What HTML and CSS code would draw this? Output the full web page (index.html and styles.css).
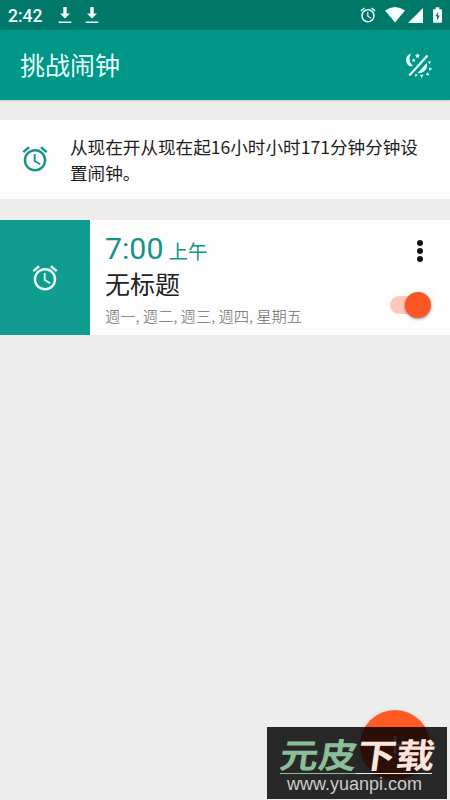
FILE: index.html
```html
<!DOCTYPE html>
<html lang="zh-CN">
<head>
<meta charset="utf-8">
<meta name="viewport" content="width=device-width">
<title>挑战闹钟</title>
<link rel="stylesheet" href="styles.css">
</head>
<body>
<svg class="defs" width="0" height="0">
  <symbol id="alarm" viewBox="0 0 24 24"><path d="M22 5.72l-4.6-3.86-1.29 1.53 4.6 3.86L22 5.72zM7.88 3.39L6.6 1.86 2 5.71l1.29 1.53 4.59-3.85zM12.5 8H11v6l4.75 2.85.75-1.23-4-2.37V8zM12 4c-4.97 0-9 4.03-9 9s4.02 9 9 9a9 9 0 0 0 0-18zm0 16c-3.87 0-7-3.13-7-7s3.13-7 7-7 7 3.13 7 7-3.13 7-7 7z"/></symbol>
  <symbol id="download" viewBox="0 0 14 18"><path d="M5.3 1h3.4v6.5H12L7 12.6 2 7.500h3.300zM.7 15.400h12.600v1.500H.7z"/></symbol>
</svg>
<header class="statusbar">
  <span class="clock">2:42</span>
  <svg class="dl"><use href="#download"/></svg>
  <svg class="dl"><use href="#download"/></svg>
  <svg class="status-alarm"><use href="#alarm"/></svg>
  <svg class="wifi" viewBox="0 0 20 16"><path d="M0 3.500Q10-3.500 20 3.500L10 15.500z"/></svg>
  <svg class="signal" viewBox="0 0 15 15"><path d="M15 0v15H0z"/></svg>
  <svg class="battery" viewBox="0 0 10 17"><path fill-rule="evenodd" d="M3 0h4v2h2q1 0 1 1v13q0 1-1 1H1q-1 0-1-1V3q0-1 1-1h2zM6 5L2.500 10h2v4.500L7.500 9h-2z"/></svg>
</header>
<div class="appbar">
  <h1>挑战闹钟</h1>
  <svg class="daynight" viewBox="0 0 28 28">
    <path d="M6.500 2.500C-.5 4 -.5 12.500 5 15.500L8 14.800C3.800 11.500 3.500 6.500 6.500 2.500z"/>
    <path d="M12.500 2.300l.8 1.500 1.700.3-1.200 1.200.2 1.700-1.500-.8-1.500.8.200-1.700L10 4.100l1.700-.3zM8.700 7.300l.6 1.200 1.300.2-.9.900.2 1.300-1.200-.6-1.200.6.200-1.300-.9-.9 1.300-.2z"/>
    <path d="M21.800 12A8 8 0 0 1 12.500 22z"/>
    <path d="M22.700 10.200l3.500.3-1.800 2.800zM24 16.200l3.300 1.800-3.300 1.800zM22.800 21.200l1.700 3.300-3.800-.8zM14.800 23.800h3.800l-1.900 3.200zM10.300 22.800l2.700 1.200-2.800 2z"/>
    <path class="slash" d="M22.500 4.500L4.300 24.500"/>
  </svg>
</div>
<main>
  <section class="card notice">
    <svg class="alarm teal"><use href="#alarm"/></svg>
    <p>从现在开从现在起16小时小时171分钟分钟设<br>置闹钟。</p>
  </section>
  <section class="card entry">
    <div class="tile"><svg class="alarm"><use href="#alarm"/></svg></div>
    <div class="details">
      <div class="time"><span class="digits">7:00</span><span class="period">上午</span></div>
      <div class="label">无标题</div>
      <div class="days">週一, 週二, 週三, 週四, 星期五</div>
    </div>
    <div class="controls">
      <div class="more"><i></i><i></i><i></i></div>
      <div class="switch"><div class="thumb"></div></div>
    </div>
  </section>
</main>
<div class="fab"><svg viewBox="0 0 14 14"><path d="M6 0h2v6h6v2H8v6H6V8H0V6h6z"/></svg></div>
<div class="watermark">
  <div class="brand"><svg viewBox="0 0 160 35"><text x="0" y="30" textLength="155" lengthAdjust="spacingAndGlyphs"><tspan class="green">元皮</tspan><tspan class="pink">下载</tspan></text></svg></div>
  <div class="rule"></div>
  <div class="site">www.yuanpi.com</div>
</div>
</body>
</html>
```

FILE: styles.css
```css
* { box-sizing: border-box; }
body {
  margin: 0;
  width: 450px;
  height: 800px;
  overflow: hidden;
  position: relative;
  background: #ededed;
  font-family: Roboto, "Noto Sans CJK SC", sans-serif;
}
svg { display: block; fill: currentColor; flex: none; }
.defs { position: absolute; }
.statusbar {
  height: 30px;
  padding: 0 8px;
  display: flex;
  align-items: center;
  background: #00796b;
  color: #f2fffc;
}
.clock { width: 50px; font-size: 17.5px; font-weight: 500; line-height: 30px; padding-top: 2px; }
.dl { width: 14px; height: 18px; margin-right: 13px; }
.status-alarm { width: 18px; height: 18px; margin-left: 247px; }
.wifi { width: 20px; height: 16px; margin-left: 8px; }
.signal { width: 15px; height: 15px; margin-left: 3px; }
.battery { width: 9px; height: 16px; margin-left: 10px; }
.appbar {
  height: 70px;
  padding: 0 17px 0 20px;
  display: flex;
  align-items: center;
  justify-content: space-between;
  background: #009688;
  color: #e8fffb;
  box-shadow: 0 1px 2px rgba(0, 0, 0, .15);
}
h1 { margin: 0; padding-top: 4px; font-size: 25px; font-weight: 400; line-height: 36px; }
.daynight { width: 28px; height: 28px; margin-top: -1px; }
.slash { stroke: currentColor; stroke-width: 2.2; }
main { padding-top: 20px; }
.card { background: #fdfdfd; display: flex; }
.notice { height: 79px; margin-bottom: 21px; padding-left: 20px; align-items: center; }
.alarm { width: 30px; height: 30px; }
.notice .alarm { margin-top: -2px; }
.teal { color: #159588; }
.notice p { margin: 0 0 0 20px; font-size: 17.600px; line-height: 26px; color: #1d1d1d; white-space: nowrap; font-family: "Noto Sans CJK SC", sans-serif; }
.entry { height: 115px; }
.tile { width: 90px; display: flex; align-items: center; justify-content: center; background: #109c8f; color: #e8fffb; }
.details { flex: 1; padding: 10px 0 0 15px; }
.time { height: 38px; display: flex; align-items: baseline; color: #129488; line-height: 37px; }
.digits { font-size: 30.300px; }
.period { font-size: 19.500px; margin-left: 5px; }
.label { height: 34px; font-size: 25px; line-height: 36px; color: #222; }
.days { font-size: 15.300px; line-height: 26px; color: #6c6c6c; font-family: "Noto Sans CJK TC", sans-serif; font-weight: 300; white-space: nowrap; }
.controls { width: 60px; display: flex; flex-direction: column; padding-top: 20px; }
.more { width: 6px; margin-left: 27px; display: grid; gap: 2px; }
.more i { width: 6px; height: 6px; border-radius: 50%; background: #151515; }
.switch { width: 40px; height: 18px; margin-top: 34px; border-radius: 9px; background: #ffc8b8; display: flex; align-items: center; justify-content: flex-end; }
.thumb { width: 26px; height: 26px; border-radius: 50%; background: #fc5622; box-shadow: 0 1px 3px rgba(0, 0, 0, .45); margin-right: -1px; flex: none; }
.fab {
  position: absolute;
  left: 360px;
  top: 710px;
  width: 70px;
  height: 70px;
  border-radius: 50%;
  background: #ff5924;
  color: #fff;
  display: grid;
  place-items: center;
  box-shadow: 0 2px 5px rgba(0, 0, 0, .25);
}
.fab svg { width: 18px; height: 18px; }
.watermark {
  position: absolute;
  left: 267px;
  top: 727px;
  width: 180px;
  height: 72px;
  padding: 10px 10px 0 13px;
  background: rgba(0, 0, 0, .83);
}
.brand svg { width: 160px; height: 36px; overflow: visible; transform: skewX(-8deg); }
.brand text { font: 700 34px "Noto Sans CJK SC", sans-serif; }
.green { fill: #8abd98; }
.pink { fill: #ffe4de; }
.rule { width: 152px; height: 1px; background: linear-gradient(90deg, #8abd98 50%, #eee 50%); }
.site { margin-left: 7px; font: 18px/20px "Liberation Sans", sans-serif; color: #ccc; }
```
